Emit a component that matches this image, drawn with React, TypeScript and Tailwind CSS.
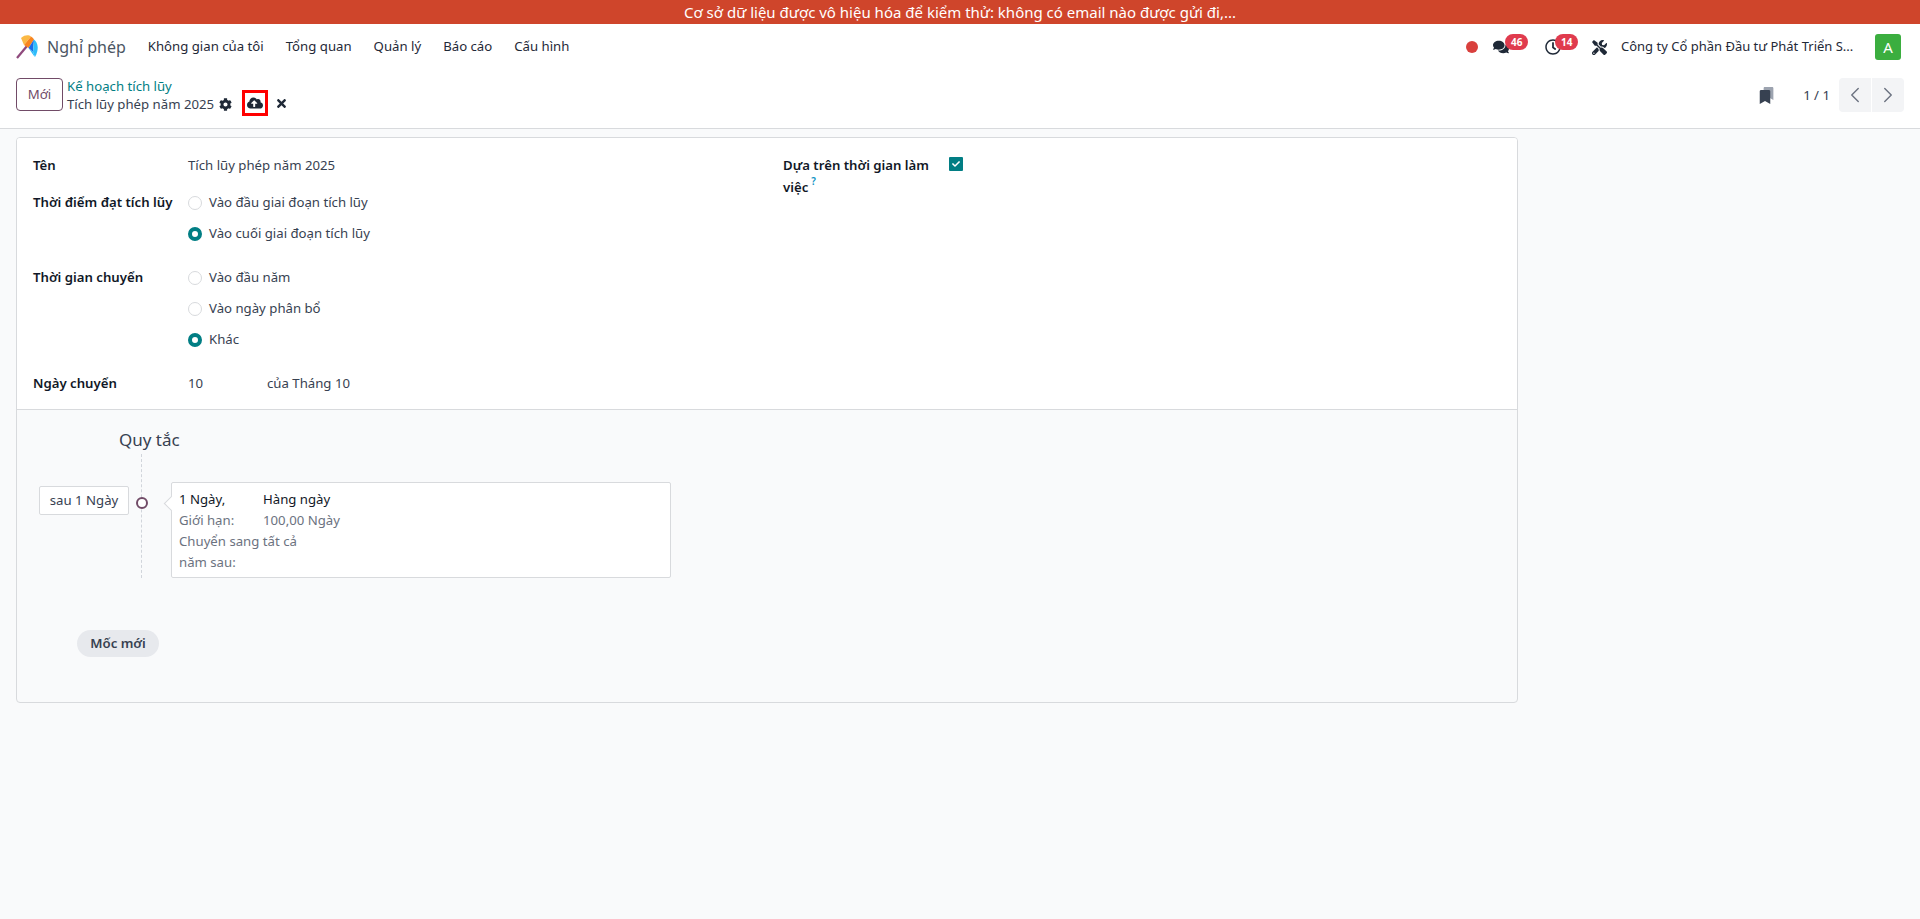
import React from 'react';
import { FaCloudUploadAlt, FaCog, FaComments, FaBookmark, FaTimes, FaTools, FaRegClock, FaCheck } from 'react-icons/fa';
import { ChevronLeft, ChevronRight } from 'lucide-react';

const menuItems = ['Không gian của tôi', 'Tổng quan', 'Quản lý', 'Báo cáo', 'Cấu hình'];

const Logo = () => (
  <svg className="w-[24px] h-[24px] shrink-0" viewBox="0 0 24 24">
    <path d="M1 23 L11 11" stroke="#8f4a7d" strokeWidth="2.2" fill="none" />
    <path d="M5 3 C9 -0.5 13 0 15 1.5 L8 10 Z" fill="#fbb945" />
    <path d="M15 1.5 C16.5 2.5 17 3 18 4.5 L12.5 13 L8 10 Z" fill="#f9851f" />
    <path d="M18 4.5 L12.5 13 L17 17 Z" fill="#1a6ce8" />
    <path d="M18 4.5 C22.5 8 23 15 19 22 L17 17 Z" fill="#2ebcfa" />
    <path d="M12.5 13 L17 17 L19 22 C17 20 15 16 12.5 13 Z" fill="#2ebcfa" />
  </svg>
);

const Radio = ({ checked, label }: { checked?: boolean; label: string }) => (
  <div className="flex items-center h-[31px]">
    {checked ? (
      <span className="w-[14px] h-[14px] rounded-full border-[4px] border-[#017e84] bg-white shrink-0" />
    ) : (
      <span className="w-[14px] h-[14px] rounded-full border border-[#d8dadd] bg-white shrink-0" />
    )}
    <span className="ml-[7px] text-[#374151]">{label}</span>
  </div>
);

const Badge = ({ value, className }: { value: string; className: string }) => (
  <span className={`absolute -top-[5px] h-[16px] px-[6px] rounded-full bg-[#e03b4e] text-white text-[10px] font-bold leading-[16px] ${className}`}>
    {value}
  </span>
);

export default function App() {
  return (
    <div
      className="min-h-screen bg-[#f9fafb] text-[13.2px] text-[#374151]"
      style={{ fontFamily: '"Noto Sans", "Open Sans", sans-serif' }}
    >
      {/* Neutralize banner */}
      <div className="h-[24px] bg-[#cf452b] text-white text-[15px] leading-[24px] text-center">
        Cơ sở dữ liệu được vô hiệu hóa để kiểm thử: không có email nào được gửi đi,...
      </div>

      {/* Navbar */}
      <div className="h-[46px] bg-white flex items-center pl-[16px] pr-[19px]">
        <Logo />
        <span className="ml-[7px] text-[16px] text-[#4b5563]">Nghỉ phép</span>
        <div className="ml-[22px] flex gap-[22px] text-[#1f2937]">
          {menuItems.map((item) => (
            <span key={item}>{item}</span>
          ))}
        </div>
        <div className="ml-auto flex items-center">
          <span className="w-[12px] h-[12px] rounded-full bg-[#d9403d]" />
          <span className="relative ml-[15px] text-[#1f2937] text-[16px]">
            <FaComments />
            <Badge value="46" className="left-[12px]" />
          </span>
          <span className="relative ml-[36px] text-[#1f2937] text-[16px]">
            <FaRegClock />
            <Badge value="14" className="left-[10px]" />
          </span>
          <FaTools className="ml-[31px] text-[#1f2937] text-[15px]" />
          <span className="ml-[14px] w-[235px] whitespace-nowrap text-[13px] text-[#1f2937]">Công ty Cổ phần Đầu tư Phát Triển S...</span>
          <span className="ml-[19px] w-[26px] h-[26px] rounded-[3px] bg-[#3bae3f] text-white text-[15px] flex items-center justify-center">
            A
          </span>
        </div>
      </div>

      {/* Control panel */}
      <div className="h-[59px] bg-white border-b border-[#d8dadd] flex items-start pt-[8px] pl-[16px] pr-[16px]">
        <button className="w-[47px] h-[33px] border border-[#714b67] rounded-[4px] text-[#714b67]">Mới</button>
        <div className="ml-[4px] leading-[18px] mt-[-1px]">
          <div className="text-[#017e84]">Kế hoạch tích lũy</div>
          <div className="flex items-center">
            <span>Tích lũy phép năm 2025</span>
            <FaCog className="ml-[5px] text-[#1f2937] text-[13px]" />
          </div>
        </div>
        <div className="ml-[10px] mt-[12px] w-[26px] h-[26px] border-[3px] border-[#ff0000] flex items-center justify-center">
          <FaCloudUploadAlt className="text-[#1f2937] text-[16px]" />
        </div>
        <FaTimes className="ml-[7px] mt-[19px] text-[#1f2937] text-[13px]" />
        <div className="ml-auto flex items-start">
          <div className="relative w-[14px] h-[18px] mt-[9px]">
            <FaBookmark className="absolute left-[4px] top-0 text-[#9ca3af] text-[13px]" />
            <FaBookmark className="absolute left-0 top-[3px] text-[#374151] text-[14px]" />
          </div>
          <span className="ml-[31px] mt-[8px] text-[#374151]">1 / 1</span>
          <div className="ml-[9px] flex gap-[1px]">
            <span className="w-[32px] h-[34px] bg-[#f3f4f6] rounded-l-[4px] flex items-center justify-center">
              <ChevronLeft size={26} strokeWidth={1.3} className="text-[#6b7280]" />
            </span>
            <span className="w-[32px] h-[34px] bg-[#f3f4f6] rounded-r-[4px] flex items-center justify-center">
              <ChevronRight size={26} strokeWidth={1.3} className="text-[#6b7280]" />
            </span>
          </div>
        </div>
      </div>

      {/* Form sheet */}
      <div className="pt-[8px] pl-[16px]">
        <div className="w-[1502px] border border-[#d8dadd] rounded-[4px] overflow-hidden">
          <div className="bg-white border-b border-[#d8dadd] h-[272px] pt-[13px] pl-[16px] flex">
            <div className="w-[750px]">
              <div className="flex h-[28px] items-center pt-[2px]">
                <span className="w-[155px] font-semibold text-[#111827]">Tên</span>
                <span>Tích lũy phép năm 2025</span>
              </div>
              <div className="flex mt-[8px]">
                <span className="w-[155px] h-[31px] leading-[31px] font-semibold text-[#111827]">Thời điểm đạt tích lũy</span>
                <div>
                  <Radio label="Vào đầu giai đoạn tích lũy" />
                  <Radio checked label="Vào cuối giai đoạn tích lũy" />
                </div>
              </div>
              <div className="flex mt-[13px]">
                <span className="w-[155px] h-[31px] leading-[31px] font-semibold text-[#111827]">Thời gian chuyển</span>
                <div>
                  <Radio label="Vào đầu năm" />
                  <Radio label="Vào ngày phân bổ" />
                  <Radio checked label="Khác" />
                </div>
              </div>
              <div className="flex h-[28px] items-center mt-[14px] pt-[2px]">
                <span className="w-[155px] font-semibold text-[#111827]">Ngày chuyển</span>
                <span className="w-[79px]">10</span>
                <span>của Tháng 10</span>
              </div>
            </div>
            <div className="flex">
              <div className="w-[166px] font-semibold text-[#111827] leading-[22px] pt-[3px]">
                <div>Dựa trên thời gian làm</div>
                <div className="flex items-start">
                  <span>việc</span>
                  <span className="ml-[3px] mt-[-6px] text-[#0f94c4] text-[10px] font-semibold">?</span>
                </div>
              </div>
              <span className="w-[14px] h-[14px] mt-[6px] rounded-[1px] bg-[#017e84] flex items-center justify-center">
                <FaCheck className="text-white text-[8px]" />
              </span>
            </div>
          </div>

          {/* Rules */}
          <div className="h-[292px] pt-[16px]">
            <div className="ml-[102px] h-[28px] text-[17px] leading-[28px] text-[#374151]">Quy tắc</div>
            <div className="relative flex items-start pt-[28px] pb-[1px] h-[124px] pl-[22px]">
              <span className="absolute left-[124px] top-0 bottom-0 border-l border-dashed border-[#d1d5db]" />
              <div className="mt-[4px] w-[90px] h-[29px] bg-white border border-[#d8dadd] rounded-[2px] flex items-center justify-center">
                sau 1 Ngày
              </div>
              <span className="relative ml-[7px] mt-[15px] w-[12px] h-[12px] rounded-full border-[2.5px] border-[#714b67] bg-white" />
              <div className="relative ml-[23px] w-[500px] h-[96px] bg-white border border-[#d8dadd] rounded-[2px] pt-[6px] pl-[7px] leading-[21px]">
                <span className="absolute -left-[6px] top-[15px] w-[11px] h-[11px] bg-white border-l border-b border-[#d8dadd] rotate-45" />
                <div className="flex text-[#111827]">
                  <span className="w-[84px]">1 Ngày,</span>
                  <span>Hàng ngày</span>
                </div>
                <div className="flex text-[#6b7280]">
                  <span className="w-[84px]">Giới hạn:</span>
                  <span>100,00 Ngày</span>
                </div>
                <div className="w-[125px] text-[#6b7280]">Chuyển sang tất cả năm sau:</div>
              </div>
            </div>
            <button className="ml-[60px] mt-[52px] w-[82px] h-[27px] rounded-full bg-[#e7e9ed] font-semibold text-[#374151]">
              Mốc mới
            </button>
          </div>
        </div>
      </div>
    </div>
  );
}
